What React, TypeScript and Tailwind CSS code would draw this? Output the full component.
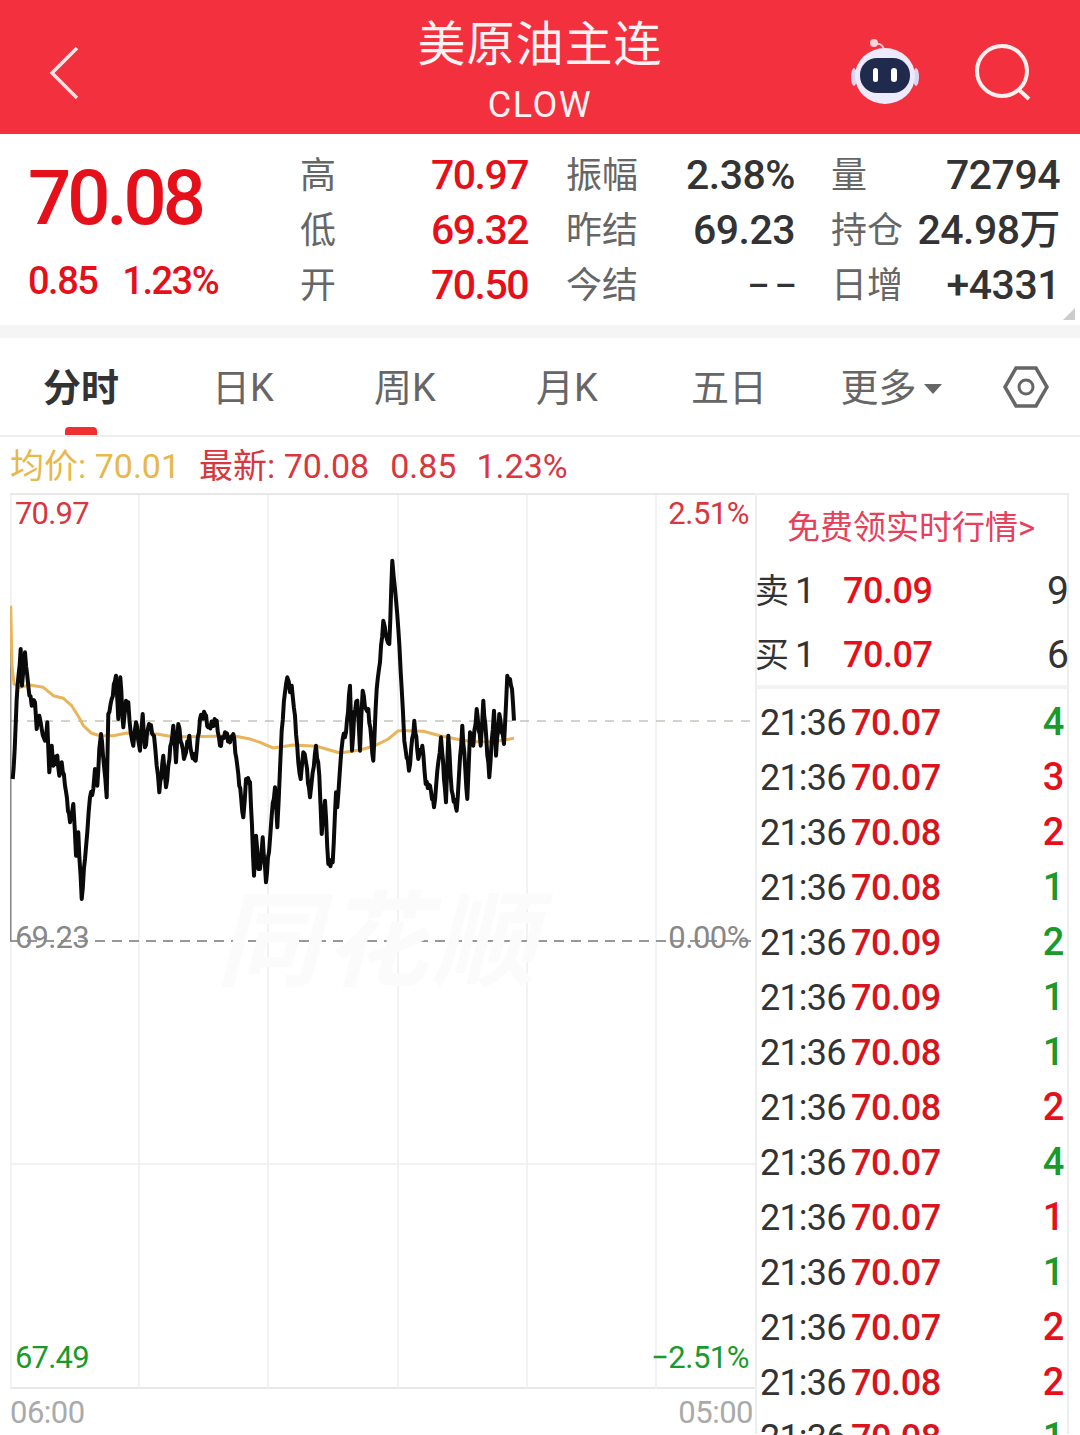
const cjk = "font-['Roboto','Noto_Sans_CJK_SC',sans-serif]";

// --- chart traces, taken in zoomed crop coordinates ---
const blackA = [[38,690],[44,600],[50,450],[62,300],[66,410],[75,310],[85,410],[95,470],[105,460],[110,540],[118,500],[125,540],[135,575],[142,520],[148,670],[155,590],[160,650],[172,620],[178,680],[185,640],[195,710],[210,820],[220,765],[228,920],[235,850],[245,1050],[255,930],[262,850],[270,745],[280,720],[285,660],[292,710],[298,600],[303,555],[312,650],[320,745],[325,495],[335,450],[348,380],[355,510],[361,385],[370,535],[378,455],[385,460],[392,550],[400,590],[408,520],[420,605],[428,495],[435,595],[447,525],[462,560],[470,650],[478,730],[490,620],[498,715],[505,650],[520,530],[528,640],[535,525],[552,630],[568,560],[575,615],[587,635],[600,510],[615,495],[625,535],[650,515],[660,590],[675,550],[690,580],[700,555],[712,650],[730,805],[738,690],[750,700],[762,980],[768,860],[775,960]];
const blackB = [[0,960],[8,865],[18,1000],[30,870],[35,800],[45,715],[52,835],[60,660],[65,545],[75,430],[82,385],[90,430],[95,410],[105,500],[115,640],[122,690],[130,610],[138,640],[150,745],[158,670],[168,590],[178,680],[185,855],[195,755],[205,945],[218,940],[228,730],[232,775],[240,660],[248,570],[258,550],[270,410],[276,605],[283,490],[292,455],[300,605],[308,425],[318,480],[325,480],[340,635],[350,420],[360,340],[370,215],[378,260],[388,285],[397,35],[405,120],[415,240],[425,420],[433,575],[447,665],[463,515],[475,630],[487,590],[497,705],[510,710],[522,775],[535,640],[543,565],[558,760],[565,560],[575,725],[590,785],[607,530],[622,750],[630,550],[640,590],[650,480],[662,590],[670,455],[688,685],[702,485],[708,620],[718,495],[732,585],[742,380],[750,390],[756,420],[762,515]];
const avgA = [[32,170],[36,350],[42,405],[60,415],[90,408],[130,415],[160,440],[190,448],[215,470],[240,510],[250,530],[275,553],[300,560],[340,560],[380,552],[420,555],[470,555],[510,562],[560,563],[640,562],[700,560],[750,570]];
const avgB = [[0,580],[40,597],[100,588],[170,592],[240,612],[300,603],[345,590],[385,570],[415,545],[440,545],[490,547],[540,560],[600,572],[640,578],[700,578],[762,568]];

// chart box starts at x=10, y=494 on the page
const toPage = (pts: number[][], offX: number) =>
  pts.map(([x, y]) => [offX + x / 3 - 10, 550 + y / 3 - 494]);

const toStr = (pts: number[][]) => pts.map(([x, y]) => `${x.toFixed(1)},${y.toFixed(1)}`).join(' ');

// the real tick line is much busier than the traced points, so rough it up between them
function roughen(pts: number[][]) {
  const out: number[][] = [];
  pts.forEach((p, i) => {
    out.push(p);
    const next = pts[i + 1];
    if (!next) return;
    const steps = Math.max(1, Math.floor(Math.abs(next[0] - p[0])));
    for (let s = 1; s < steps; s++) {
      const t = s / steps;
      const wob = Math.sin(i * 7.3 + s * 2.1) * 3.5;
      out.push([p[0] + (next[0] - p[0]) * t, p[1] + (next[1] - p[1]) * t + wob]);
    }
  });
  return out;
}

const blackLine = toStr(roughen([...toPage(blackA, 0), ...toPage(blackB, 260)]));
const avgLine = toStr([...toPage(avgA, 0), ...toPage(avgB, 260)]);

const stats = [
  ['高', '70.97', '振幅', '2.38%', '量', '72794'],
  ['低', '69.32', '昨结', '69.23', '持仓', '24.98万'],
  ['开', '70.50', '今结', '– –', '日增', '+4331'],
];

const tabs = ['分时', '日K', '周K', '月K', '五日'];

type Trade = { price: string; qty: number; up: boolean };
const trades: Trade[] = [
  { price: '70.07', qty: 4, up: false },
  { price: '70.07', qty: 3, up: true },
  { price: '70.08', qty: 2, up: true },
  { price: '70.08', qty: 1, up: false },
  { price: '70.09', qty: 2, up: false },
  { price: '70.09', qty: 1, up: false },
  { price: '70.08', qty: 1, up: false },
  { price: '70.08', qty: 2, up: true },
  { price: '70.07', qty: 4, up: false },
  { price: '70.07', qty: 1, up: true },
  { price: '70.07', qty: 1, up: false },
  { price: '70.07', qty: 2, up: true },
  { price: '70.08', qty: 2, up: true },
  { price: '70.08', qty: 1, up: false },
];

function Robot() {
  return (
    <svg width="72" height="68" viewBox="0 0 72 68">
      <path d="M34 14 C34 8 31 5 25 6" fill="none" stroke="#f6c9d2" strokeWidth="2" />
      <circle cx="24" cy="5" r="4" fill="#f9d3da" />
      <ellipse cx="4" cy="39" rx="3" ry="9" fill="#d9d6f5" />
      <ellipse cx="66" cy="39" rx="3" ry="9" fill="#d9d6f5" />
      <ellipse cx="35" cy="38" rx="30" ry="28" fill="#eceafc" />
      <rect x="10" y="20" width="50" height="35" rx="17" fill="#1f2a4d" />
      <rect x="23" y="30" width="5" height="14" rx="2.500" fill="#ffffff" />
      <rect x="41" y="30" width="6" height="14" rx="3" fill="#ffffff" />
    </svg>
  );
}

function Header() {
  return (
    <header className="relative flex h-[134px] flex-col items-center bg-[#f3303e] text-[#fdf2f2]">
      <h1 className="mt-[15px] text-[48px] leading-[60px] tracking-[1px]">美原油主连</h1>
      <p className="mt-[8px] text-[36px] leading-[44px] tracking-[1.500px]">CLOW</p>
      <div className="absolute left-[46px] top-[45px]">
        <svg width="36" height="56" viewBox="0 0 36 56">
          <path d="M31 3 L6 28 L31 53" fill="none" stroke="#fbe3e3" strokeWidth="3.500" />
        </svg>
      </div>
      <div className="absolute left-[850px] top-[38px]">
        <Robot />
      </div>
      <div className="absolute left-[972px] top-[43px]">
        <svg width="62" height="60" viewBox="0 0 62 60">
          <circle cx="30" cy="28" r="25" fill="none" stroke="#fff0ee" strokeWidth="4" />
          <path d="M46 46 L57 56" fill="none" stroke="#fff0ee" strokeWidth="4" />
        </svg>
      </div>
    </header>
  );
}

function StatsPanel() {
  return (
    <section className="relative flex h-[204px] border-b-[13px] border-[#f5f5f5]">
      <div className="w-[300px] pl-[28px] text-[#e5101a]">
        <div className="mt-[22px] text-[76px] font-medium leading-[84px] tracking-[-4px]">70.08</div>
        <div className="mt-[19px] flex text-[38px] font-medium leading-[44px] tracking-[-1.500px]">
          <span>0.85</span>
          <span className="ml-[25px]">1.23%</span>
        </div>
      </div>
      <div className="mt-[14px] flex flex-col">
        {stats.map((row) => (
          <div key={row[0]} className="flex h-[55px] items-center text-[41px] tracking-[-1.500px]">
            <span className="w-[120px] text-[36px] tracking-normal text-[#666]">{row[0]}</span>
            <span className="w-[108px] text-right font-medium text-[#e5101a]">{row[1]}</span>
            <span className="ml-[38px] w-[90px] text-[36px] tracking-normal text-[#666]">{row[2]}</span>
            <span className={row[3] === '– –' ? 'w-[139px] text-right text-[34px] font-medium text-[#333]' : 'w-[139px] text-right font-medium tracking-[-0.5px] text-[#333]'}>{row[3]}</span>
            <span className="ml-[36px] w-[80px] text-[36px] tracking-normal text-[#666]">{row[4]}</span>
            <span className="w-[149px] text-right font-medium tracking-[-0.5px] whitespace-nowrap text-[#333]">{row[5]}</span>
          </div>
        ))}
      </div>
      <div className="absolute right-[5px] top-[174px] h-0 w-0 border-b-[12px] border-l-[12px] border-b-[#ccc] border-l-transparent" />
    </section>
  );
}

function Tabs() {
  return (
    <nav className="flex h-[99px] items-center border-b-2 border-[#eeeeee] text-[38px] text-[#666]">
      {tabs.map((t, i) => (
        <div key={t} className="relative flex h-full w-[162px] items-center justify-center pt-[3px]">
          <span className={i === 0 ? 'font-bold text-[#333]' : ''}>{t}</span>
          {i === 0 && <div className="absolute bottom-0 left-[65px] h-[8px] w-[32px] rounded-t-[4px] bg-[#ef3030]" />}
        </div>
      ))}
      <div className="flex h-full w-[162px] items-center justify-center pt-[3px]">
        <span>更多</span>
        <span className="ml-[7px] mt-[2px] h-0 w-0 border-x-[9px] border-t-[10px] border-x-transparent border-t-[#666]" />
      </div>
      <div className="flex h-full w-[108px] items-center justify-center">
        <svg width="48" height="44" viewBox="0 0 48 44">
          <path d="M14 3 H34 L45 22 L34 41 H14 L3 22 Z" fill="none" stroke="#666" strokeWidth="3.500" />
          <circle cx="24" cy="22" r="7" fill="none" stroke="#666" strokeWidth="3" />
        </svg>
      </div>
    </nav>
  );
}

function Chart() {
  return (
    <div className="relative h-[896px] w-[745px] border-y-2 border-[#e8e8e8]">
      <svg className="absolute inset-0" width="745" height="894" viewBox="0 2 745 894">
        {[1, 129, 258, 388, 517, 646].map((x) => (
          <line key={x} x1={x} y1="0" x2={x} y2="896" stroke="#eeeeee" strokeWidth="1.500" />
        ))}
        <line x1="0" y1="671" x2="745" y2="671" stroke="#eeeeee" strokeWidth="1.500" />
        <line x1="0" y1="228" x2="745" y2="228" stroke="#a8a89a" strokeWidth="1" strokeDasharray="9 8" />
        <line x1="0" y1="448" x2="745" y2="448" stroke="#777" strokeWidth="1.500" strokeDasharray="10 7" />
        <line x1="0.500" y1="156" x2="0.500" y2="448" stroke="#888" strokeWidth="2" />
        <polyline points={avgLine} fill="none" stroke="#e9b45a" strokeWidth="3" strokeLinejoin="round" />
        <polyline points={blackLine} fill="none" stroke="#0a0a0a" strokeWidth="4" strokeLinejoin="round" />
      </svg>

      {/* watermark */}
      <div className="absolute left-[206px] top-[388px] text-[104px] font-bold italic leading-[120px] tracking-[4px] whitespace-nowrap text-[#fbfbfb]">同花顺</div>

      <span className="absolute left-[5px] top-[0px] text-[31px] leading-[38px] tracking-[-0.8px] text-[#d9363e]">70.97</span>
      <span className="absolute right-[6px] top-[0px] text-[31px] leading-[38px] tracking-[-0.5px] text-[#d9363e]">2.51%</span>
      <span className="absolute left-[5px] top-[424px] text-[31px] leading-[38px] tracking-[-0.8px] text-[#888]">69.23</span>
      <span className="absolute right-[6px] top-[424px] text-[31px] leading-[38px] tracking-[-0.5px] text-[#888]">0.00%</span>
      <span className="absolute left-[5px] top-[844px] text-[31px] leading-[38px] tracking-[-0.8px] text-[#1a9a2a]">67.49</span>
      <span className="absolute right-[6px] top-[844px] text-[31px] leading-[38px] tracking-[-0.5px] text-[#1a9a2a]">−2.51%</span>
    </div>
  );
}

function SidePanel() {
  return (
    <aside className="h-[941px] w-[314px] border-x-2 border-t-2 border-[#eeeeee] pt-[2px]">
      <div className="flex h-[62px] items-center pl-[30px] text-[33px] whitespace-nowrap text-[#e8405a]">免费领实时行情&gt;</div>
      {[['卖', '70.09', '9'], ['买', '70.07', '6']].map(([side, price, qty]) => (
        <div key={side} className="flex h-[64px] items-center text-[36px] text-[#333]">
          <span className="-ml-[2px] w-[37px] text-[34px]">{side}</span>
          <span className="w-[51px] pl-[3px]">1</span>
          <span className="font-medium tracking-[-0.5px] text-[#e5101a]">{price}</span>
          <span className="-mr-[2px] ml-auto text-[39px]">{qty}</span>
        </div>
      ))}
      <div className="mb-[4px] h-[4px] -translate-y-[2px] bg-[#f3f3f3]" />
      {trades.map((t, i) => (
        <div key={i} className="flex h-[55px] items-center pl-[3px] pr-[3px] text-[36px] tracking-[-0.4px]">
          <span className="w-[91px] tracking-[-0.8px] text-[#333]">21:36</span>
          <span className="font-medium text-[#d8141c]">{t.price}</span>
          <span className={t.up ? 'ml-auto text-[38px] font-medium text-[#e5101a]' : 'ml-auto text-[38px] font-medium text-[#1a9a2a]'}>{t.qty}</span>
        </div>
      ))}
    </aside>
  );
}

export default function App() {
  return (
    <div className={`h-[1435px] w-[1080px] overflow-hidden bg-white ${cjk}`}>
      <Header />
      <StatsPanel />
      <Tabs />
      <div className="flex h-[56px] items-center pl-[10px] pt-[3px] text-[34px] whitespace-nowrap">
        <span className="text-[#e8b84a]">均价: 70.01</span>
        <span className="ml-[19px] text-[#d9363e]">最新: 70.08</span>
        <span className="ml-[21px] text-[#d9363e]">0.85</span>
        <span className="ml-[20px] text-[#d9363e]">1.23%</span>
      </div>
      <div className="flex pl-[10px]">
        <div className="w-[745px]">
          <Chart />
          <div className="flex justify-between pr-[2px] pt-[4px] text-[31px] leading-[40px] tracking-[-0.5px] text-[#aaaaaa]">
            <span>06:00</span>
            <span>05:00</span>
          </div>
        </div>
        <SidePanel />
      </div>
    </div>
  );
}
